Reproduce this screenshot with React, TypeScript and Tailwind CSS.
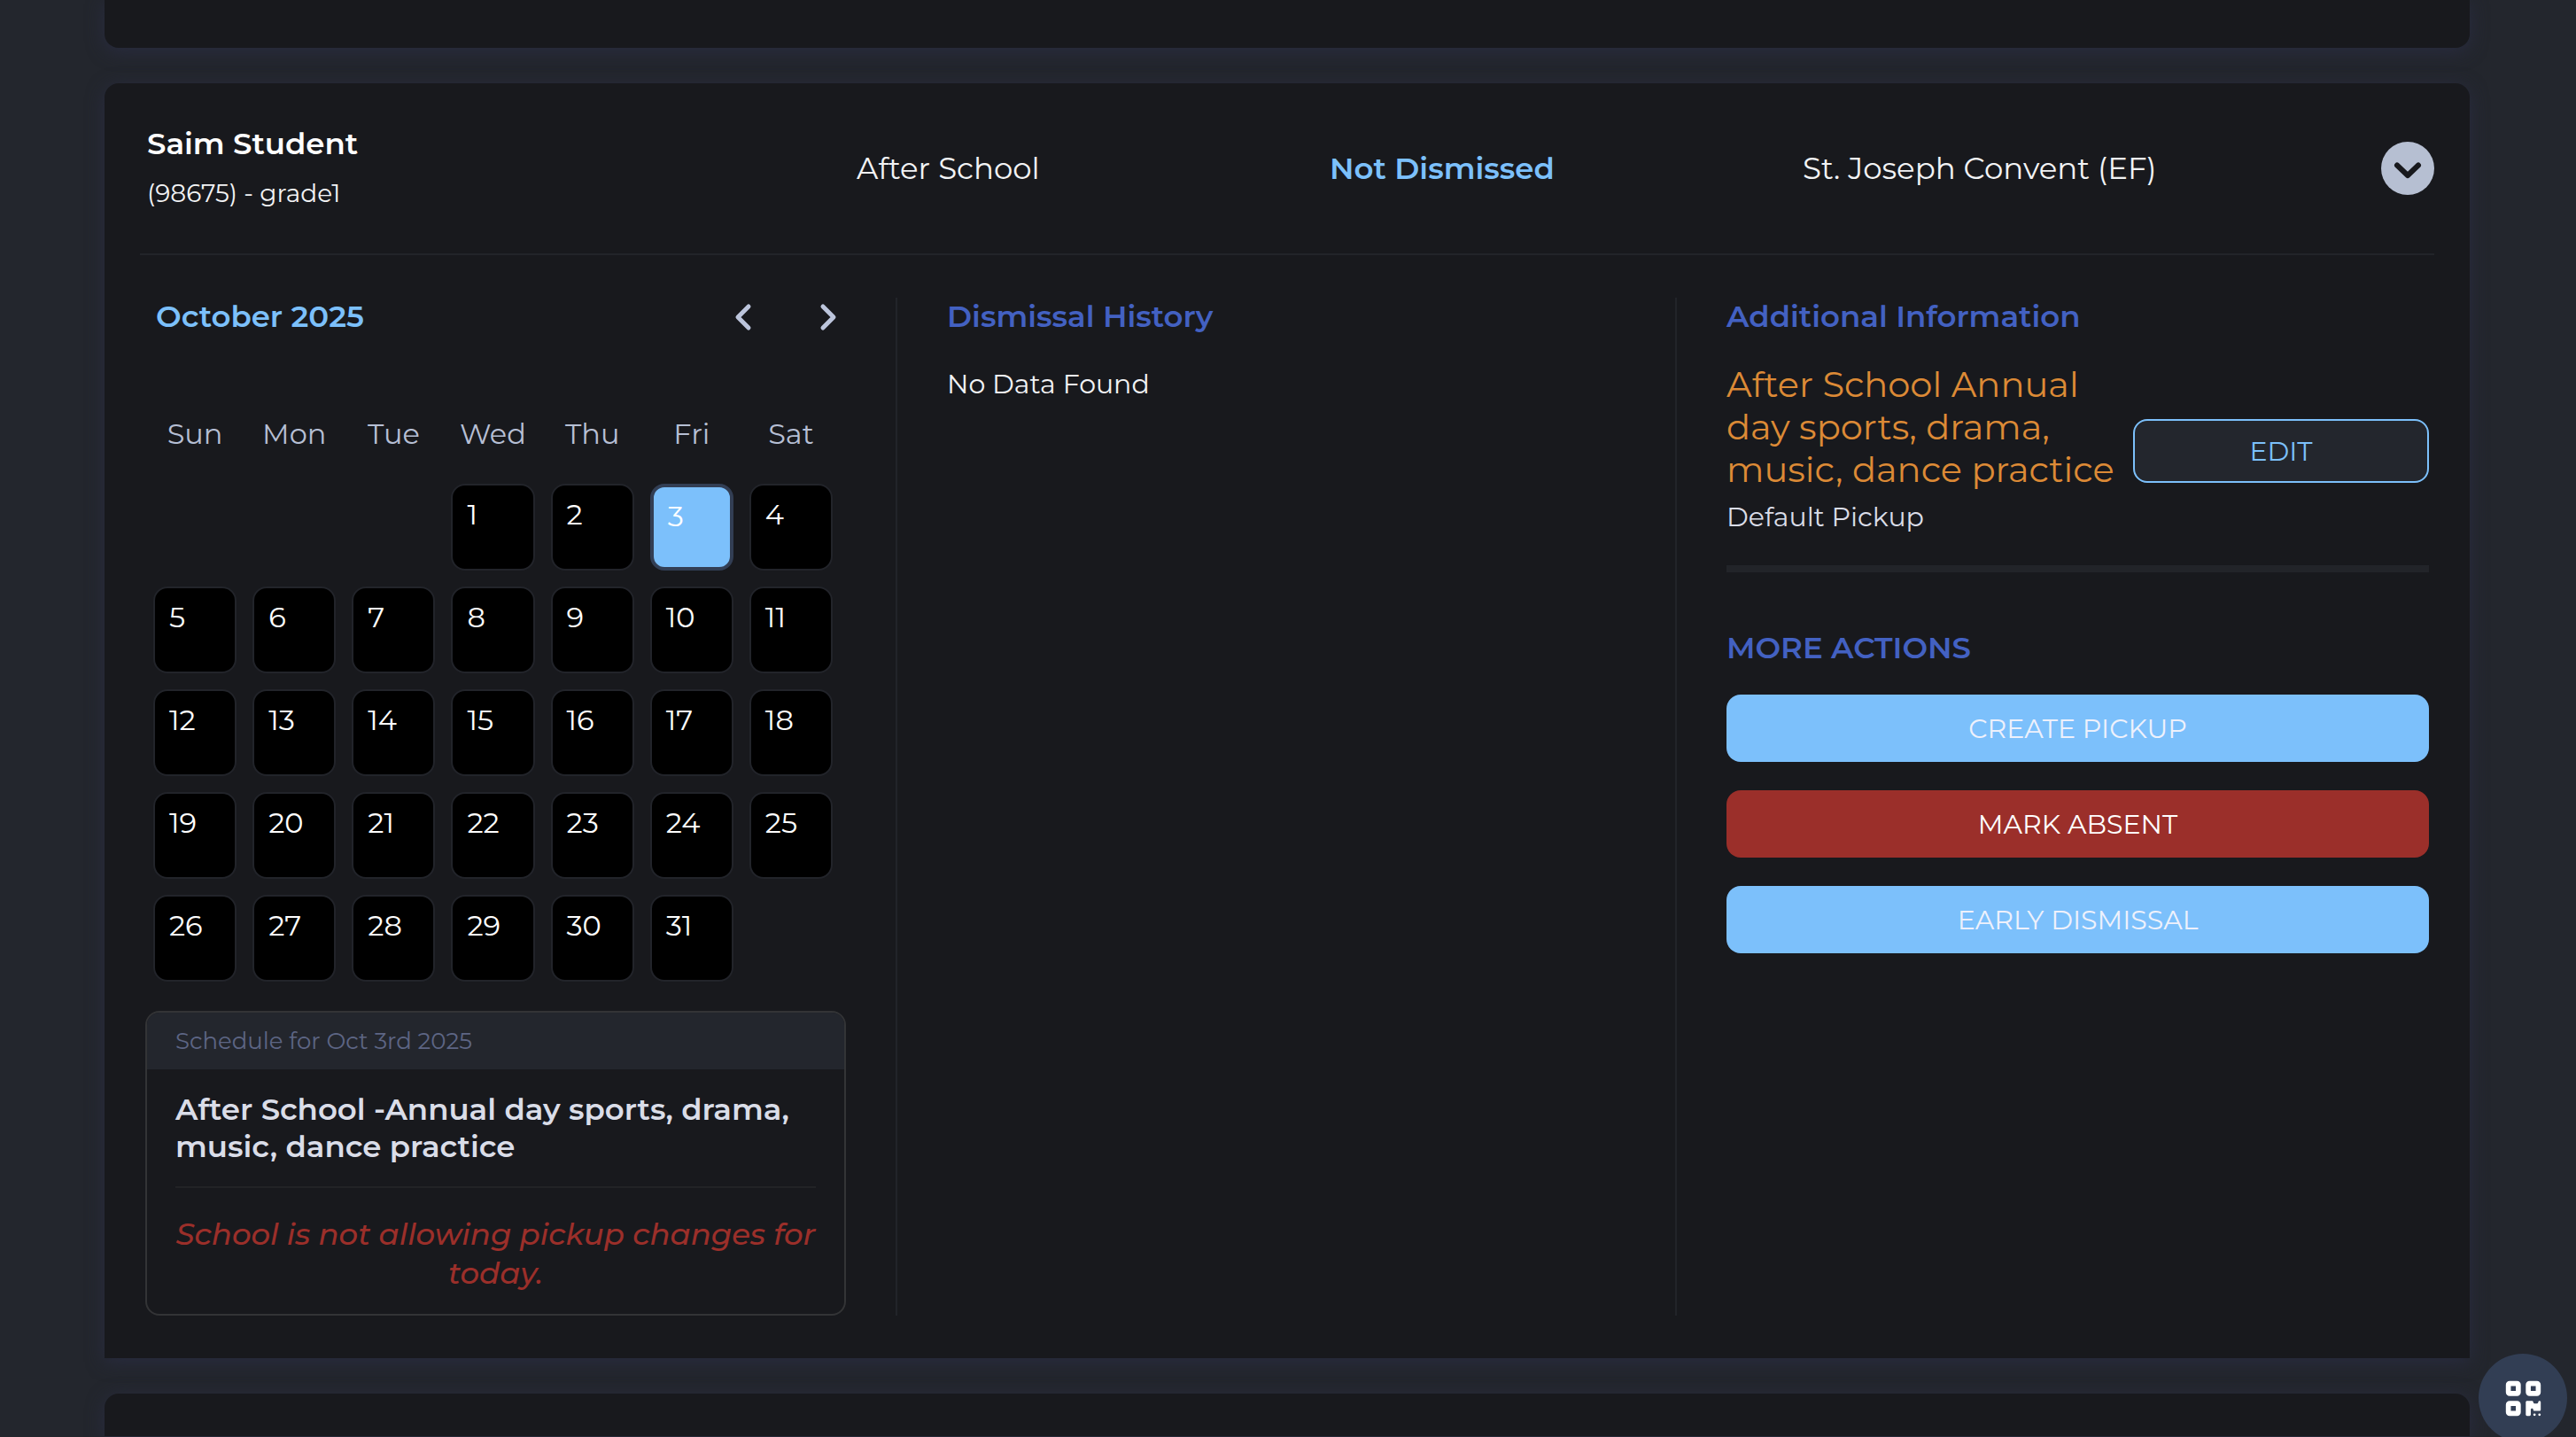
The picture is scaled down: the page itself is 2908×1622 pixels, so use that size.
import { useState } from "react";
import type { ReactNode } from "react";
import { FaQrcode } from "react-icons/fa6";

const WEEKDAYS = ["Sun", "Mon", "Tue", "Wed", "Thu", "Fri", "Sat"];
const FIRST_WEEKDAY = 3;
const DAYS = Array.from({ length: 31 }, (_, i) => i + 1);

function ColumnHeading({ children }: { children: ReactNode }) {
  return <h3 className="text-[34px] leading-[42px] font-semibold text-[#4361c2]">{children}</h3>;
}

function MonthButton({ label, path }: { label: string; path: string }) {
  return (
    <button type="button" aria-label={label} className="flex size-10 items-center justify-center">
      <svg viewBox="0 0 40 40" className="size-10" fill="none" stroke="#bcc5dc" strokeWidth="5" strokeLinecap="round" strokeLinejoin="round">
        <path d={path} />
      </svg>
    </button>
  );
}

function StudentHeader() {
  return (
    <header className="grid h-48 grid-cols-[3fr_2fr_2fr_2fr_1fr] items-center">
      <div className="flex flex-col gap-2 pl-12">
        <h2 className="text-[34px] leading-[48px] font-semibold text-white">Saim Student</h2>
        <p className="text-[28px] leading-[48px] text-[#f2f3f5]">(98675) - grade1</p>
      </div>
      <p className="pl-12 text-[34px] leading-[48px] text-[#f2f3f5]">After School</p>
      <p className="pl-12 text-[34px] leading-[48px] font-semibold text-[#7cc0fb]">Not Dismissed</p>
      <p className="pl-12 text-[34px] leading-[48px] whitespace-nowrap text-[#f2f3f5]">St. Joseph Convent (EF)</p>
      <div className="flex justify-end pr-10">
        <button type="button" aria-label="Collapse student" className="size-[60px] rounded-full bg-[#b6bfd2]">
          <svg viewBox="0 0 60 60" className="size-full" fill="none" stroke="#18191d" strokeWidth="6" strokeLinecap="round" strokeLinejoin="round">
            <path d="M18 26.5 30 38 42 26.5" />
          </svg>
        </button>
      </div>
    </header>
  );
}

function Calendar() {
  const [selected, setSelected] = useState(3);
  return (
    <section aria-label="Calendar">
      <div className="flex h-[42px] items-center justify-between pl-3">
        <h3 className="text-[34px] leading-[42px] font-semibold text-[#7cc0fb]">October 2025</h3>
        <div className="flex gap-14">
          <MonthButton label="Previous month" path="M26 9 14 21 26 33" />
          <MonthButton label="Next month" path="M14 9 26 21 14 33" />
        </div>
      </div>
      <div className="mt-[92px] mr-1.5 grid grid-cols-7 text-center text-[32px] leading-[40px] text-[#b6bfd4]">
        {WEEKDAYS.map((day) => (
          <span key={day}>{day}</span>
        ))}
      </div>
      <div className="mt-9 mr-1.5 grid grid-cols-7 gap-y-[18px]">
        {Array.from({ length: FIRST_WEEKDAY }, (_, i) => (
          <span key={`blank-${i}`} />
        ))}
        {DAYS.map((day) => (
          <button
            key={day}
            type="button"
            aria-pressed={day === selected}
            onClick={() => setSelected(day)}
            className={
              day === selected
                ? "mx-[9px] flex h-[98px] items-start rounded-2xl border-4 border-[#323e54] bg-[#7cc0fb] px-4 pt-[13px] text-[32px] leading-[40px] text-white"
                : "mx-[9px] flex h-[98px] items-start rounded-2xl border-2 border-[#22242a] bg-black px-4 pt-[13px] text-[32px] leading-[40px] text-white"
            }
          >
            {day}
          </button>
        ))}
      </div>
    </section>
  );
}

function ScheduleBox() {
  return (
    <section className="mt-[33px] overflow-hidden rounded-2xl border-2 border-[#333436]">
      <h4 className="bg-[#23262d] px-8 text-[26px] leading-[64px] text-[#5d6584]">Schedule for Oct 3rd 2025</h4>
      <div className="px-8 pt-6 pb-6">
        <p className="text-[34px] leading-[42px] font-semibold text-[#dadde8]">
          After School -Annual day sports, drama, music, dance practice
        </p>
        <hr className="mt-6 border-t-2 border-[#222326]" />
        <p className="mt-[30px] text-center text-[34px] leading-[44px] font-medium text-[#9b2f2a] italic">
          School is not allowing pickup changes for today.
        </p>
      </div>
    </section>
  );
}

function ActionButton({ tone, children }: { tone: "blue" | "red"; children: ReactNode }) {
  return (
    <button
      type="button"
      className={
        tone === "blue"
          ? "h-[76px] w-full rounded-2xl bg-[#7cc0fb] text-[30px] text-[#eef1fb]"
          : "h-[76px] w-full rounded-2xl bg-[#9b2f2a] text-[30px] text-white"
      }
    >
      {children}
    </button>
  );
}

function AdditionalInformation() {
  return (
    <section>
      <ColumnHeading>Additional Information</ColumnHeading>
      <div className="mt-8 flex items-center gap-5">
        <div className="min-w-0 flex-1">
          <p className="text-[40px] leading-[48px] text-[#dc8a36]">After School Annual day sports, drama, music, dance practice</p>
          <p className="mt-1.5 text-[30px] leading-[48px] text-[#dadde8]">Default Pickup</p>
        </div>
        <button type="button" className="h-[72px] w-[334px] shrink-0 rounded-2xl border-2 border-[#7cc0fb] bg-[#23262d] text-[30px] text-[#7cc0fb]">
          EDIT
        </button>
      </div>
      <hr className="mt-[30px] border-t-8 border-[#222429]" />
      <div className="mt-16">
        <ColumnHeading>MORE ACTIONS</ColumnHeading>
      </div>
      <div className="mt-8 flex flex-col gap-8">
        <ActionButton tone="blue">CREATE PICKUP</ActionButton>
        <ActionButton tone="red">MARK ABSENT</ActionButton>
        <ActionButton tone="blue">EARLY DISMISSAL</ActionButton>
      </div>
    </section>
  );
}

export default function App() {
  return (
    <div className="min-h-screen overflow-hidden bg-[#23262d] font-['Montserrat',Inter,sans-serif]">
      <main className="mr-[120px] ml-[118px] flex flex-col gap-10">
        <div className="h-[54px] rounded-b-2xl bg-[#18191d] shadow-[0_4px_20px_#292c40]" />
        <article className="rounded-t-2xl bg-[#18191d] pb-12 shadow-[0_4px_20px_#292c40]">
          <StudentHeader />
          <hr className="mx-10 border-t-2 border-[#222429]" />
          <div className="mt-12 mr-[17px] ml-[13px] grid grid-cols-3">
            <div className="pr-[56px] pl-[33px]">
              <Calendar />
              <ScheduleBox />
            </div>
            <section className="border-l-2 border-[#222429] px-14">
              <ColumnHeading>Dismissal History</ColumnHeading>
              <p className="mt-8 text-[30px] leading-[48px] text-[#f2f3f5]">No Data Found</p>
            </section>
            <div className="border-l-2 border-[#222429] pr-[29px] pl-14">
              <AdditionalInformation />
            </div>
          </div>
        </article>
        <div className="h-12 rounded-t-2xl bg-[#18191d] shadow-[0_4px_20px_#292c40]" />
      </main>
      <button
        type="button"
        aria-label="Show QR code"
        className="fixed right-2.5 -bottom-1.5 flex size-[100px] items-center justify-center rounded-full bg-[#323e54] text-white"
      >
        <FaQrcode className="size-[45px]" />
      </button>
    </div>
  );
}
